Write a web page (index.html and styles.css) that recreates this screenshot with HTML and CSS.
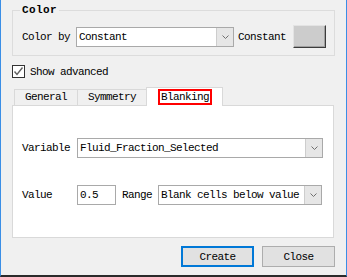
FILE: index.html
```html
<!DOCTYPE html>
<html lang="en">
<head>
    <meta charset="UTF-8">
    <title>Blanking</title>
    <link rel="stylesheet" href="styles.css">
</head>
<body>
    <div class="window">
        <fieldset class="group">
            <legend>Color</legend>
            <div class="row">
                <span class="label">Color by</span>
                <div class="combo combo-color">
                    <span class="combo-text">Constant</span>
                    <span class="combo-btn"><svg width="7" height="4" viewBox="0 0 7 4"><polyline points="0.5,0.5 3.5,3.5 6.5,0.5" fill="none" stroke="#707070" stroke-width="1"/></svg></span>
                </div>
                <span class="label label-constant">Constant</span>
                <button class="swatch"></button>
            </div>
        </fieldset>

        <label class="check">
            <span class="check-box"><svg width="11" height="11" viewBox="0 0 11 11"><polyline points="1.5,5.5 4,8.5 9.5,1.5" fill="none" stroke="#606060" stroke-width="1.4"/></svg></span>
            Show advanced
        </label>

        <div class="tabs">
            <div class="tab">General</div>
            <div class="tab">Symmetry</div>
            <div class="tab active"><span class="mark">Blanking</span></div>
        </div>

        <div class="pane">
            <div class="field-row">
                <span class="field-label">Variable</span>
                <div class="combo combo-variable">
                    <span class="combo-text">Fluid_Fraction_Selected</span>
                    <span class="combo-btn"><svg width="7" height="4" viewBox="0 0 7 4"><polyline points="0.5,0.5 3.5,3.5 6.5,0.5" fill="none" stroke="#707070" stroke-width="1"/></svg></span>
                </div>
            </div>
            <div class="field-row">
                <span class="field-label">Value</span>
                <div class="input">0.5</div>
                <span class="label label-range">Range</span>
                <div class="combo combo-range">
                    <span class="combo-text">Blank cells below value</span>
                    <span class="combo-btn"><svg width="7" height="4" viewBox="0 0 7 4"><polyline points="0.5,0.5 3.5,3.5 6.5,0.5" fill="none" stroke="#707070" stroke-width="1"/></svg></span>
                </div>
            </div>
        </div>

        <div class="actions">
            <button class="btn primary">Create</button>
            <button class="btn">Close</button>
        </div>
    </div>
</body>
</html>
```

FILE: styles.css
```css
body {
    margin: 0;
    font-family: "Liberation Mono", "DejaVu Sans Mono", monospace;
    font-size: 11px;
    letter-spacing: -0.6px;
    line-height: 12px;
    color: #000;
    background-color: #f0f0f0;
}

.window {
    box-sizing: border-box;
    width: 347px;
    height: 277px;
    padding: 4px 11px 0 11px;
    border-left: 1px solid #3a8ee6;
    border-right: 1px solid #3a8ee6;
    border-bottom: 2px solid #2b2b2b;
    background-color: #f0f0f0;
    display: flex;
    flex-direction: column;
}

/* Color group */
.group {
    margin: 0;
    min-width: 0;
    padding: 9px 8px 7px 9px;
    border: 1px solid #dcdcdc;
}

.group legend {
    padding: 0 2px;
    margin-left: -2px;
    font-weight: bold;
    letter-spacing: 0.4px;
    line-height: 12px;
}

.row {
    display: flex;
    align-items: center;
}

.label {
    white-space: nowrap;
}

.combo {
    box-sizing: border-box;
    height: 20px;
    display: flex;
    border: 1px solid #a9a9a9;
    background-color: #fff;
}

.combo-text {
    flex: 1;
    padding-left: 2px;
    display: flex;
    align-items: center;
    white-space: nowrap;
    overflow: hidden;
}

.combo-btn {
    width: 16px;
    display: flex;
    align-items: center;
    justify-content: center;
    background-color: #e6e6e6;
    border-left: 1px solid #cdcdcd;
}

.combo-color {
    width: 158px;
    margin-left: 6px;
}

.label-constant {
    margin-left: 4px;
}

.swatch {
    box-sizing: border-box;
    width: 33px;
    height: 23px;
    margin-left: 7px;
    padding: 0;
    background-color: #cccccc;
    border: 1px solid;
    border-color: #e3e3e3 #3c3c3c #3c3c3c #e3e3e3;
    box-shadow: inset -1px -1px 0 #a0a0a0;
}

/* Checkbox */
.check {
    display: flex;
    align-items: center;
    margin: 9px 0 9px 0;
    height: 13px;
}

.check-box {
    box-sizing: border-box;
    width: 13px;
    height: 13px;
    margin-right: 5px;
    border: 1px solid #333;
    background-color: #fff;
    display: flex;
    align-items: center;
    justify-content: center;
}

/* Tabs */
.tabs {
    height: 18px;
    display: flex;
    align-items: flex-end;
    padding-left: 2px;
}

.tab {
    box-sizing: border-box;
    height: 16px;
    padding: 0 10px;
    border: 1px solid #d9d9d9;
    border-bottom: none;
    line-height: 15px;
    background-color: #f0f0f0;
}

.tab + .tab {
    margin-left: -1px;
}

.tab.active {
    position: relative;
    z-index: 1;
    height: 19px;
    margin-bottom: -1px;
    padding: 1px 10px 0 11px;
    background-color: #fff;
}

.mark {
    display: block;
    padding: 0 1px;
    border: 2px solid #ff0000;
    line-height: 12px;
}

.pane {
    margin-right: 1px;
    padding: 32px 10px 32px 9px;
    border: 1px solid #d9d9d9;
    background-color: #fff;
    display: flex;
    flex-direction: column;
    gap: 27px;
}

.field-row {
    display: flex;
    align-items: center;
    height: 20px;
}

.field-label {
    width: 55px;
    flex-shrink: 0;
}

.combo-variable {
    width: 246px;
}

.input {
    box-sizing: border-box;
    width: 39px;
    height: 20px;
    padding-left: 2px;
    border: 1px solid #a9a9a9;
    display: flex;
    align-items: center;
}

.label-range {
    margin-left: 6px;
}

.combo-range {
    width: 164px;
    margin-left: 6px;
}

/* Buttons */
.actions {
    display: flex;
    justify-content: flex-end;
    gap: 8px;
    margin-top: 8px;
}

.btn {
    box-sizing: border-box;
    width: 73px;
    height: 21px;
    padding: 0;
    font-family: inherit;
    font-size: 11px;
    letter-spacing: -0.6px;
    color: #000;
    background-color: #e1e1e1;
    border: 1px solid #adadad;
}

.btn.primary {
    border: 2px solid #0078d7;
}
```
